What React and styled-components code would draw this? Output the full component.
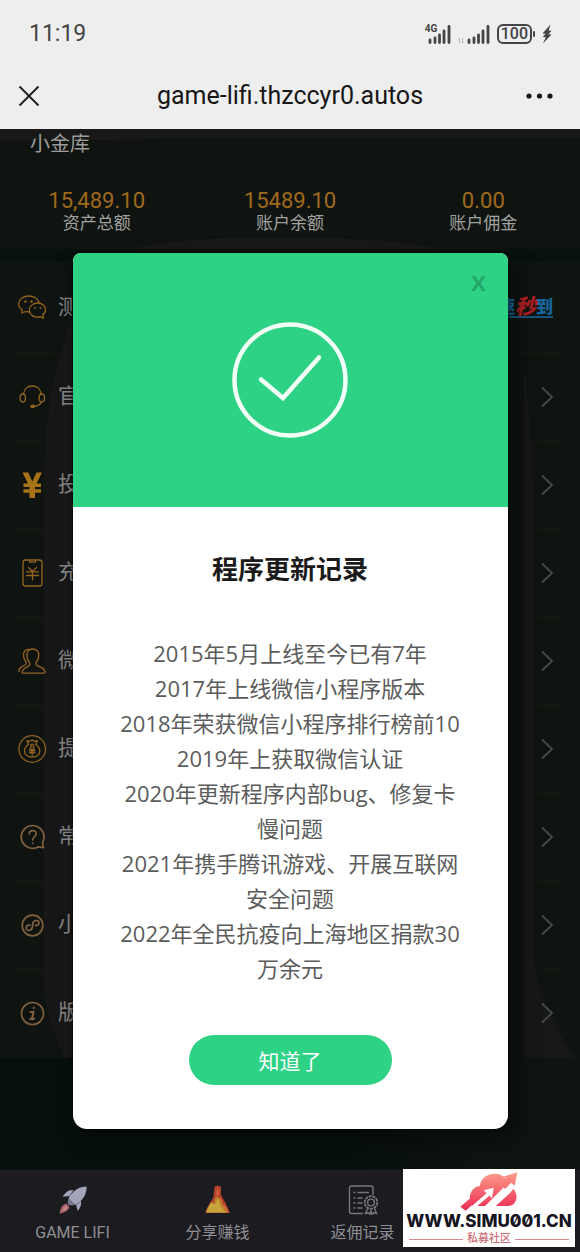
import React, { useState } from 'react';
import styled, { createGlobalStyle, css } from 'styled-components';

const GREEN = '#2dd284';
const GOLD = '#94641f';

const GlobalStyle = createGlobalStyle`
	* {
		box-sizing: border-box;
	}
	body {
		margin: 0;
		background: #0f1410;
		font-family: Roboto, "Noto Sans CJK SC", sans-serif;
	}
	button {
		border: 0;
		padding: 0;
		background: none;
		font-family: inherit;
		cursor: pointer;
	}
	svg {
		display: block;
	}
`

const Screen = styled.div`
	position: relative;
	min-height: 100vh;
	display: flex;
	flex-direction: column;
`

const StatusBar = styled.div`
	height: 65px;
	padding: 2px 28px 0 29px;
	display: flex;
	align-items: center;
	justify-content: space-between;
	background: #eeeeee;
	color: #444;
	font-size: 23px;
`

const StatusIcons = styled.div`
	display: flex;
	align-items: center;
	gap: 7px;
`

const Battery = styled.span`
	height: 20px;
	padding: 0 2px;
	border: 2px solid #444;
	border-radius: 6px;
	font-size: 16px;
	font-weight: 500;
	line-height: 16px;
`

const BatteryGroup = styled.span`
	display: flex;
	align-items: center;
	gap: 1px;
`

const SignalBox = styled.span`
	position: relative;
	display: flex;
	align-items: flex-end;
	gap: 3px;
`

const NetworkLabel = styled.span`
	position: absolute;
	left: -3px;
	top: 0;
	font-size: 10px;
	font-weight: 700;
	line-height: 10px;
`

const TitleBar = styled.header`
	height: 64px;
	padding: 0 26px 2px 18px;
	display: flex;
	align-items: center;
	background: #eeeeee;
`

const BarButton = styled.button`
	width: 30px;
	display: flex;
	justify-content: ${props => props.$end ? 'flex-end' : 'flex-start'};
`

const PageTitle = styled.h1`
	flex: 1;
	margin: 0;
	padding-left: 8px;
	text-align: center;
	color: #161616;
	font-size: 25px;
	font-weight: 400;
	line-height: 32px;
`

const WebView = styled.div`
	position: relative;
	flex: 1;
	display: flex;
	flex-direction: column;
	background: #081110;
`

const Wallet = styled.section`
	position: relative;
	padding-bottom: 16px;
	background: #101410;
	border-top: 1px solid #1c1a1a;
`

const WalletTitle = styled.h2`
	position: relative;
	margin: 0 0 30px;
	padding-left: 30px;
	color: #9c9e9c;
	font-size: 20px;
	font-weight: 400;
	line-height: 28px;
`

const Stats = styled.div`
	position: relative;
	display: grid;
	grid-template-columns: repeat(3, 1fr);
	text-align: center;
`

const StatValue = styled.div`
	color: #a06a1c;
	font-size: 22px;
	line-height: 25px;
`

const StatLabel = styled.div`
	color: #a0a2a0;
	font-size: 17px;
	line-height: 20px;
`

const Backdrop = styled.svg`
	position: absolute;
	inset: 0;
	width: 100%;
	height: 100%;
`

const Menu = styled.nav`
	position: relative;
	margin-top: 13px;
	padding: 2px 0;
	background: #0f1410;
`

const MenuRow = styled.a`
	position: relative;
	height: 88px;
	margin: 0 15px;
	padding: 0 12px 0 3px;
	display: flex;
	align-items: center;
	gap: 12px;
	color: #858585;
	font-size: 21px;
	text-decoration: none;

	& + & {
		border-top: 1px solid #171814;
	}
`

const RowLabel = styled.span`
	flex: 1;
	padding-bottom: 6px;
`

const BankBadge = styled.span`
	display: flex;
	align-items: center;
	color: #15679d;
	font-size: 17px;
	font-weight: 900;
	line-height: 18px;
	border-bottom: 2px solid #15567f;
`

const BankAccent = styled.span`
	color: #ad1f24;
	font-size: 21px;
	font-style: italic;
`

const Shade = styled.div`
	position: absolute;
	inset: 0;
	display: flex;
	align-items: center;
	justify-content: center;
`

const Dialog = styled.div`
	width: 75%;
	border-radius: 8px 8px 14px 14px;
	overflow: hidden;
	background: #fff;
	box-shadow: 0 0 3px #000, 8px 10px 24px rgba(0, 0, 0, 0.4);
	font-family: "Open Sans", "Noto Sans CJK SC", sans-serif;
`

const DialogHead = styled.div`
	position: relative;
	height: 254px;
	display: flex;
	align-items: center;
	justify-content: center;
	background: ${GREEN};
`

const DialogClose = styled.button`
	position: absolute;
	top: 14px;
	right: 17px;
	width: 24px;
	color: #24a86a;
	font-size: 22px;
	font-weight: 700;
	line-height: 30px;
`

const DialogBody = styled.div`
	padding: 44px 46px;
	display: flex;
	flex-direction: column;
	align-items: center;
	text-align: center;
`

const DialogTitle = styled.h3`
	margin: 0 0 49px;
	color: #1b1b1b;
	font-size: 26px;
	font-weight: 700;
	line-height: 36px;
`

const LogLine = styled.p`
	margin: 0;
	color: #5c5c5c;
	font-size: 22px;
	line-height: 35px;
`

const ConfirmButton = styled.button`
	width: 203px;
	height: 50px;
	margin-top: 49px;
	border-radius: 25px;
	background: ${GREEN};
	color: #fff;
	font-size: 21px;
`

const Spacer = styled.div`
	flex: 1;
	background: linear-gradient(90deg, #07100f 60%, #0f1410 85%);
`

const TabBar = styled.nav`
	height: 82px;
	padding: 14px 0 7px;
	display: grid;
	grid-template-columns: repeat(4, 1fr);
	background: #1b1b20;
	border-top: 1px solid #222226;
`

const Tab = styled.a`
	display: flex;
	flex-direction: column;
	align-items: center;
	gap: 6px;
	color: #8f8f93;
	font-size: 16px;
	line-height: 24px;
	text-decoration: none;
`

const SiteMark = styled.div`
	position: absolute;
	right: 5px;
	bottom: 5px;
	width: 172px;
	height: 78px;
	padding-top: 2px;
	display: flex;
	flex-direction: column;
	align-items: center;
	background: #fff;
`

const SiteName = styled.div`
	color: #15141f;
	font-family: Inter, sans-serif;
	font-size: 17px;
	font-weight: 800;
	font-feature-settings: "zero";
	line-height: 21px;
	white-space: nowrap;
`

const SiteTag = styled.div`
	width: 160px;
	display: flex;
	align-items: center;
	gap: 4px;
	color: #c96f77;
	font-size: 11px;
	font-weight: 500;
	line-height: 14px;

	&::before,
	&::after {
		content: "";
		flex: 1;
		height: 1px;
		background: #d58a90;
	}
`

const LineIcon = styled.svg.attrs({ viewBox: '0 0 28 28', width: 28, height: 28 })`
	fill: none;
	stroke: ${GOLD};
	stroke-width: 1.3;
	stroke-linecap: round;
	stroke-linejoin: round;
	${props => props.$brown && css`
		stroke: #80603e;
		stroke-width: 1.7;
	`}
`

const WechatIcon = () => (
	<LineIcon>
		<path d="M11.6 17.6c-1.2.4-2.6.4-4-.1L3.8 19l.4-3.1C2 14.4.7 12.3.7 9.7.7 5.5 5.2 2 10.7 2s9.6 3 10.3 6.7" />
		<path d="M19.5 9c4.6 0 8 3 8 6.8 0 2.1-1 3.9-2.7 5.1l.5 3.3-3.2-1.6c-5.5 1.7-10.8-1.5-10.8-6.5C11.3 12.3 15 9 19.5 9z" />
		<g fill={GOLD} stroke="none">
			<circle cx="7.5" cy="7.5" r="1.2" />
			<circle cx="13.5" cy="7.5" r="1.2" />
			<circle cx="17" cy="14" r="1" />
			<circle cx="22.5" cy="14" r="1" />
		</g>
	</LineIcon>
)

const HeadsetIcon = () => (
	<LineIcon>
		<path d="M5.5 11C6 6 9.5 3 14.3 3S22.6 6 23.1 11" />
		<ellipse cx="4.8" cy="15" rx="2.7" ry="4" />
		<ellipse cx="23.8" cy="15" rx="2.7" ry="4" />
		<path d="M23.5 19c-1.2 2.6-3.7 4-7.3 4.2" />
		<ellipse cx="14.6" cy="23.3" rx="1.8" ry="1.2" fill={GOLD} />
	</LineIcon>
)

const YuanIcon = () => (
	<LineIcon>
		<path
			d="M4.5 1.5h5.8l4 9 4.2-9H24l-5.5 11H23V16h-6v2.2h6v3.5h-6V27h-5.500v-5.300h-6v-3.500h6V16h-6v-3.500h4.500z"
			fill="#a87216"
			stroke="none"
		/>
	</LineIcon>
)

const PhonePayIcon = () => (
	<LineIcon>
		<rect x="5" y="1" width="19" height="26" rx="2.5" />
		<path d="M11.5 1.5v1.6h6V1.5M10.5 8.5l4 4 4-4M8.5 12.8h12M8.5 16.5h12M14.5 12.8V21" />
	</LineIcon>
)

const PeopleIcon = () => (
	<LineIcon>
		<path d="M14.5 2c4 0 6.7 2.4 6.2 7-.2 2.4-1 4.5-2.4 6-.8 1-.6 3 .8 3.7l4.4 2c2 .8 3.1 2 3.4 4.3.1.8-.3 1.2-1.2 1.2H5.2c-.9 0-1.2-.5-1.1-1.2.3-2.2 1.3-3.3 3.2-4.2l3.2-1.6c1.6-.8 1.7-2.8.8-4-1.3-1.6-2.2-3.6-2.4-6C8.5 4.5 10.7 2 14.5 2z" />
		<path d="M10.5 2.3C7.2 2.5 5.2 4.8 5.5 9c.2 2.2 1 4 2.2 5.5 1 1.3.6 2.7-.9 3.5l-3 1.7C1.9 20.7.9 22.4.9 24.6" />
	</LineIcon>
)

const MoneyBagIcon = () => (
	<LineIcon>
		<circle cx="14.2" cy="14" r="13.3" />
		<path d="M10.5 9.5 9 5.5l2.5.8L14.2 5l2.6 1.3 2.5-.8-1.5 4" />
		<path d="M10.5 9.5c-2.5 1.6-4 4-4 6.5 0 3.7 3.3 6 7.7 6s7.6-2.3 7.6-6c0-2.5-1.5-4.9-4-6.5" />
		<circle cx="14.2" cy="10.7" r="1.5" />
		<path d="m12 13.2 2.2 2 2.2-2M11.5 15.5h5.4M11.5 17.5h5.4M14.2 15.5v4.3" />
	</LineIcon>
)

const QuestionIcon = () => (
	<LineIcon $brown>
		<path d="M24.5 19.5c1-1.7 1.5-3.6 1.5-5.6C26 7.6 20.9 2.5 14.6 2.5S3.2 7.6 3.2 13.9s5.1 11.4 11.4 11.4c2 0 3.8-.5 5.4-1.4l5.5.7z" />
		<path d="M11.2 11c0-4.6 7-4.4 7-.2 0 2.8-3.5 2.8-3.5 6M14.7 20v.3" />
	</LineIcon>
)

const MiniAppIcon = () => (
	<LineIcon $brown>
		<circle cx="14.5" cy="14.5" r="10.3" />
		<path d="M12 14.2c-5-.2-5 5.5-1 5.3 2-.1 3-1.5 3.3-3.2l.6-3.8c.3-1.7 1.5-3 3.3-3 4.2.2 3.7 5.4-.9 5" />
	</LineIcon>
)

const InfoIcon = () => (
	<LineIcon $brown>
		<circle cx="14.5" cy="14.5" r="11" />
		<path d="M15.8 8.6v.3M12.5 13h3l-1.5 6.5c-.2 1 .8 1 2.2 0M12.2 20h2" strokeWidth="2" />
	</LineIcon>
)

const Chevron = () => (
	<svg width="12" height="22" viewBox="0 0 12 22" fill="none" stroke="#464b4d" strokeWidth="1.8">
		<path d="M1 1.5 11 11 1 20.5" />
	</svg>
)

const SignalIcon = () => (
	<svg width="23" height="20" viewBox="0 0 23 20" stroke="#444" strokeWidth="2.8" strokeLinecap="round">
		<path d="M2 18.5v-2.5M7 18.5v-4.5M11.5 18.5V11M16 18.5V7M21 18.5V2.5" />
	</svg>
)

const DataIcon = () => (
	<svg width="6" height="8" viewBox="0 0 6 8" fill="none" stroke="#bbb">
		<path d="M1.5 7V2L0 3.5M4.5 2v5L6 5.5" />
	</svg>
)

const BoltIcon = () => (
	<svg width="10" height="20" viewBox="0 0 10 20" fill="#444">
		<path d="M8.5.5.5 9.5l3 .3-2.7 3.2 3 .2L1 19.5l8.5-9-3-.3 3-3.4-2.8-.2z" />
	</svg>
)

const RocketIcon = () => (
	<svg width="30" height="30" viewBox="0 0 30 30">
		<path d="M7.5 8c2-2.3 4.5-3.2 8-3l-4 6-7 .8zM18 20l5-4c.7 3.5-.5 6.5-3.2 10z" fill="#a2a4ba" />
		<path d="M28.5 1.5c.5 7-3.5 14.5-11.5 18.5l-6.5-6.5C14 6 21 1.5 28.5 1.5z" fill="#a2a4ba" />
		<path d="M10.5 13.5C9.5 16 9.7 18 10.3 19.5c1.7 1 4 1.2 6.7.5z" fill="#74768e" />
		<path d="M8.5 18.5C4 19.5 2.5 23 1.5 28.5c5.5-.8 9-3 10-6.5z" fill="#a56369" />
		<path d="M8.5 20.5c-2.5 1-3.5 3-4.2 5.5 2.7-.6 4.7-1.7 5.2-4z" fill="#bd8780" />
	</svg>
)

const FlaskIcon = () => (
	<svg width="30" height="30" viewBox="0 0 30 30">
		<path d="M11.5 1.5c2-1.3 5-1 6.5.5v8l4.5 8 4.5 10H2.5c.5-3 2-6 4-9l4-7z" fill="#b5422a" />
		<path d="m13 11 5 3 2 6 4 3 1 4.5H3c.5-3 2-6 4-8.5l3 1z" fill="#c37c2c" />
		<path d="m8 17 4 3 3-7 3 9 5 5.5H3.5z" fill="#c5a53c" />
		<path d="m15 3 1 6-2 2-1-4zM21 18l4 8-3-2z" fill="#cf6138" />
	</svg>
)

const RecordIcon = () => (
	<svg width="30" height="30" viewBox="0 0 30 30" fill="none" stroke="#77777b" strokeWidth="1.4">
		<path d="M15 28.5H3.5c-1.5 0-2-.7-2-2V3c0-1.5.7-2 2-2H23c1.4 0 2 .6 2 2v7" />
		<path d="M5.5 7.5h2M9.5 7.5h11.500M5.5 13h2M9.5 13h5M5.5 18h2M9.5 18h5M5.5 23h2M9.5 23h5" />
		<circle cx="23" cy="17.5" r="6.3" strokeDasharray="3 .8" strokeWidth="1.8" />
		<circle cx="23" cy="17.5" r="3.4" />
		<path d="m19.5 23.5-2 5 3-.7 1.5 1.7 1-4 1 4 1.7-1.7 2.8.7-2-5" />
	</svg>
)

const CloudLogo = () => (
	<svg width="60" height="40" viewBox="0 0 180 120">
		<defs>
			<linearGradient id="cloud" gradientUnits="userSpaceOnUse" x1="90" y1="5" x2="90" y2="115">
				<stop offset="0" stopColor="#fb9c88" />
				<stop offset="1" stopColor="#ee2f56" />
			</linearGradient>
		</defs>
		<path
			d="M36 98C26 74 38 48 62 45 66 20 86 8 108 8c14 0 25 6 33 16l20 28c15 14 15 36 2 48-5 4-10 5-18 5H40z"
			fill="url(#cloud)"
		/>
		<path d="M4 107 56 62l14 13-50 44z" fill="url(#cloud)" />
		<path d="m22 119 61-52-9-9 30-8-5 32-8-8-37 32z" fill="#fff" />
		<path d="m76 107 72-72 22 6-14 22-48 44z" fill="#fff" />
		<path d="m122 42 20-20-10-5 43-13-8 40-10-9-18 18z" fill="url(#cloud)" />
	</svg>
)

const stats = [
	{ value: '15,489.10', label: '资产总额' },
	{ value: '15489.10', label: '账户余额' },
	{ value: '0.00', label: '账户佣金' },
]

const menu = [
	{ label: '测', icon: WechatIcon, bank: true },
	{ label: '官', icon: HeadsetIcon },
	{ label: '投', icon: YuanIcon },
	{ label: '充', icon: PhonePayIcon },
	{ label: '微', icon: PeopleIcon },
	{ label: '提', icon: MoneyBagIcon },
	{ label: '常', icon: QuestionIcon },
	{ label: '小', icon: MiniAppIcon },
	{ label: '版', icon: InfoIcon },
]

const updates = [
	'2015年5月上线至今已有7年',
	'2017年上线微信小程序版本',
	'2018年荣获微信小程序排行榜前10',
	'2019年上获取微信认证',
	'2020年更新程序内部bug、修复卡慢问题',
	'2021年携手腾讯游戏、开展互联网安全问题',
	'2022年全民抗疫向上海地区捐款30万余元',
]

const tabs = [
	{ label: 'GAME LIFI', icon: RocketIcon },
	{ label: '分享赚钱', icon: FlaskIcon },
	{ label: '返佣记录', icon: RecordIcon },
]

const UpdateDialog = ({ onClose }) => (
	<Shade>
		<Dialog role="dialog" aria-labelledby="update-title">
			<DialogHead>
				<DialogClose onClick={onClose}>X</DialogClose>
				<svg width="116" height="116" viewBox="0 0 116 116" fill="none" stroke="#f1fff7" strokeWidth="4.5">
					<circle cx="58" cy="58" r="55.5" />
					<path d="M29 57.5 51 76 87 35.5" strokeLinecap="round" />
				</svg>
			</DialogHead>
			<DialogBody>
				<DialogTitle id="update-title">程序更新记录</DialogTitle>
				{updates.map(line => <LogLine key={line}>{line}</LogLine>)}
				<ConfirmButton onClick={onClose}>知道了</ConfirmButton>
			</DialogBody>
		</Dialog>
	</Shade>
)

const App = () => {
	const [open, setOpen] = useState(true);

	return (
		<Screen>
			<GlobalStyle />
			<StatusBar>
				<span>11:19</span>
				<StatusIcons>
					<SignalBox><NetworkLabel>4G</NetworkLabel><SignalIcon /></SignalBox>
					<SignalBox><DataIcon /><SignalIcon /></SignalBox>
					<BatteryGroup>
						<Battery>100</Battery>
						<svg width="2" height="6"><rect width="2" height="6" rx="1" fill="#444" /></svg>
					</BatteryGroup>
					<BoltIcon />
				</StatusIcons>
			</StatusBar>
			<TitleBar>
				<BarButton aria-label="close">
					<svg width="22" height="22" viewBox="0 0 22 22" stroke="#222" strokeWidth="2">
						<path d="M1.5 1.5l19 19M20.5 1.5l-19 19" />
					</svg>
				</BarButton>
				<PageTitle>game-lifi.thzccyr0.autos</PageTitle>
				<BarButton aria-label="more" $end>
					<svg width="28" height="6" viewBox="0 0 28 6" fill="#161616">
						<circle cx="3" cy="3" r="2.6" />
						<circle cx="13.5" cy="3" r="2.6" />
						<circle cx="24" cy="3" r="2.6" />
					</svg>
				</BarButton>
			</TitleBar>
			<WebView>
				<Wallet>
					<Backdrop viewBox="0 0 580 120" preserveAspectRatio="none" fill="#191818">
						<path d="M0 0h580v8H200q-100 3-200 3zM130 120q60-13 160-12t150 12z" />
					</Backdrop>
					<WalletTitle>小金库</WalletTitle>
					<Stats>
						{stats.map(item => (
							<div key={item.label}>
								<StatValue>{item.value}</StatValue>
								<StatLabel>{item.label}</StatLabel>
							</div>
						))}
					</Stats>
				</Wallet>
				<Menu>
					<Backdrop viewBox="0 0 580 796" preserveAspectRatio="none" fill="#181717">
						<path d="M80 40Q44 110 44 230v500q4 30 20 66h511q-40-60-42-110V240q0-60-9-140v-10z" />
						<path d="M508 0v796h16V0z" fill="#0f1410" />
					</Backdrop>
					{menu.map(({ label, icon: Icon, bank }) => (
						<MenuRow href="#" key={label}>
							<Icon />
							<RowLabel>{label}</RowLabel>
							{bank ? <BankBadge>速<BankAccent>秒</BankAccent>到</BankBadge> : <Chevron />}
						</MenuRow>
					))}
				</Menu>
				<Spacer />
				<TabBar>
					{tabs.map(({ label, icon: Icon }) => (
						<Tab href="#" key={label}><Icon />{label}</Tab>
					))}
				</TabBar>
				{open && <UpdateDialog onClose={() => setOpen(false)} />}
			</WebView>
			<SiteMark>
				<CloudLogo />
				<SiteName>WWW.SIMU001.CN</SiteName>
				<SiteTag>私募社区</SiteTag>
			</SiteMark>
		</Screen>
	)
}

export default App
